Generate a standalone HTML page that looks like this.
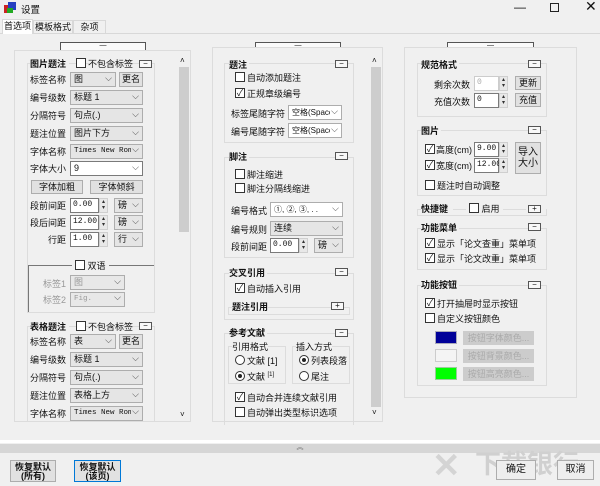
<!DOCTYPE html><html><head><meta charset="utf-8"><style>
*{box-sizing:border-box;margin:0;padding:0}
body{width:600px;height:486px;background:#f0f0f0;position:relative;overflow:hidden;font-family:"Liberation Sans","Noto Sans CJK SC",sans-serif;font-size:9px;color:#111}
.a{position:absolute;white-space:nowrap}
.b{font-weight:bold}
.grp{position:absolute;border:1px solid #dcdcdc}
.pan{position:absolute;border:1px solid #dcdcdc;background:#f0f0f0}
.cb{position:absolute;width:10px;height:10px;border:1px solid #333;background:#fff;font-size:9px;line-height:8px;text-align:center}
.rd{position:absolute;width:10px;height:10px;border:1px solid #333;border-radius:50%;background:#fff}
.rd.on::after{content:"";position:absolute;left:2px;top:2px;width:4px;height:4px;border-radius:50%;background:#222}
.cmb{position:absolute;height:15px;border:1px solid #adadad;background:#e5e5e5;padding-left:3px;line-height:13px;font-size:9px;overflow:hidden}
.cmb::after{content:"⌵";position:absolute;right:3px;top:-1px;font-size:9px;color:#444;background:inherit;padding-left:1px}
.cmb.w{background:#fff}
.cmb.d{color:#999;background:#e8e8e8}
.btn{position:absolute;border:1px solid #adadad;background:#e1e1e1;text-align:center;line-height:13px;font-size:9px}
.inp{position:absolute;height:15px;border:1px solid #7a7a7a;background:#fff;font-family:"Liberation Mono",monospace;font-size:8px;padding-left:2px;line-height:12px}
.sp{position:absolute;width:9px;height:15px;background:#e8e8e8;border:1px solid #cfcfcf;font-size:6px;line-height:6px;text-align:center;color:#333}
.mn{position:absolute;width:13px;height:8px;border:1px solid #555;background:#f8f8f8;font-size:8px;line-height:5px;text-align:center}
.top{position:absolute;height:9px;border:1px solid #555;background:#fafafa;font-size:7px;line-height:5px;text-align:center}
.sb{position:absolute;width:12px;background:#f0f0f0}
.th{position:absolute;left:1px;width:10px;background:#cdcdcd}
</style></head><body>
<div class="a" style="left:4px;top:2px;width:12px;height:12px"><div style="position:absolute;left:0;top:3px;width:8px;height:8px;background:#c22"></div><div style="position:absolute;left:4px;top:0;width:8px;height:8px;background:#2540c0"></div><div style="position:absolute;left:3px;top:6px;width:6px;height:5px;background:#2a2"></div></div>
<div class="a" style="left:21px;top:2px;font-size:9.5px">设置</div>
<div class="a" style="left:514px;top:0px;font-size:12px">—</div>
<div class="a" style="left:550px;top:3px;width:9px;height:9px;border:1px solid #222"></div>
<div class="a" style="left:585px;top:-2px;font-size:14px">✕</div>
<div class="a" style="left:0;top:33px;width:600px;height:1px;background:#d8d8d8"></div>
<div class="a" style="left:2px;top:19px;width:31px;height:15px;background:#fff;border:1px solid #d8d8d8;border-bottom:none;text-align:center;line-height:13px">首选项</div>
<div class="a" style="left:33px;top:20px;width:40px;height:13px;border:1px solid #d8d8d8;border-bottom:none;text-align:center;line-height:12px">模板格式</div>
<div class="a" style="left:73px;top:20px;width:33px;height:13px;border:1px solid #d8d8d8;border-bottom:none;text-align:center;line-height:12px">杂项</div>
<div class="a" style="left:0;top:34px;width:600px;height:406px;background:#f0f0f0"></div>

<div class="top" style="left:60px;top:42px;width:86px">—</div>
<div class="pan" style="left:14px;top:50px;width:177px;height:372px"></div>
<div class="sb" style="left:178px;top:55px;height:365px"><div class="a" style="left:2px;top:1px;font-size:8px">˄</div><div class="th" style="top:12px;height:165px"></div><div class="a" style="left:2px;bottom:1px;font-size:8px">˅</div></div>
<div class="grp" style="left:27px;top:63px;width:128px;height:250px"></div>
<div class="a b" style="left:30px;top:57px;background:#f0f0f0;padding-right:3px">图片题注</div>
<div class="cb" style="left:76px;top:58px"></div><div class="a" style="left:88px;top:57px">不包含标签</div>
<div class="mn" style="left:139px;top:60px">−</div>
<div class="a" style="left:30px;top:73px">标签名称</div><div class="cmb" style="left:70px;top:72px;width:46px">图</div><div class="btn" style="left:119px;top:72px;width:24px;height:15px">更名</div>
<div class="a" style="left:30px;top:91px">编号级数</div><div class="cmb" style="left:70px;top:90px;width:73px">标题 1</div>
<div class="a" style="left:30px;top:109px">分隔符号</div><div class="cmb" style="left:70px;top:108px;width:73px">句点(.)</div>
<div class="a" style="left:30px;top:127px">题注位置</div><div class="cmb" style="left:70px;top:126px;width:73px">图片下方</div>
<div class="a" style="left:30px;top:145px">字体名称</div><div class="cmb" style="left:70px;top:144px;width:73px;font-family:'Liberation Mono';font-size:7.5px">Times New Roma</div>
<div class="a" style="left:30px;top:162px">字体大小</div><div class="cmb w" style="left:70px;top:161px;width:73px;border-color:#7a7a7a">9</div>
<div class="btn" style="left:31px;top:180px;width:52px;height:14px">字体加粗</div><div class="btn" style="left:90px;top:180px;width:53px;height:14px">字体倾斜</div>
<div class="a" style="left:30px;top:199px">段前间距</div><div class="inp" style="left:70px;top:198px;width:29px">0.00</div><div class="sp" style="left:99px;top:198px">▴<br>▾</div><div class="cmb" style="left:114px;top:198px;width:29px">磅</div>
<div class="a" style="left:30px;top:216px">段后间距</div><div class="inp" style="left:70px;top:215px;width:29px">12.00</div><div class="sp" style="left:99px;top:215px">▴<br>▾</div><div class="cmb" style="left:114px;top:215px;width:29px">磅</div>
<div class="a" style="left:48px;top:233px">行距</div><div class="inp" style="left:70px;top:232px;width:29px">1.00</div><div class="sp" style="left:99px;top:232px">▴<br>▾</div><div class="cmb" style="left:114px;top:232px;width:29px">行</div>
<div class="a" style="left:28px;top:265px;width:126px;height:47px;border-top:1px solid #777;border-left:1px solid #777"></div>
<div class="a" style="left:72px;top:259px;background:#f0f0f0;padding:0 3px"><span style="display:inline-block;width:10px;height:10px;border:1px solid #333;background:#fff;vertical-align:-1px"></span> 双语</div>
<div class="a" style="left:43px;top:277px;color:#999">标签1</div><div class="cmb d" style="left:70px;top:275px;width:55px">图</div>
<div class="a" style="left:43px;top:293px;color:#999">标签2</div><div class="cmb d" style="left:70px;top:292px;width:55px;font-family:'Liberation Mono';font-size:7.5px">Fig.</div>
<div class="grp" style="left:27px;top:326px;width:128px;height:100px;border-bottom:none"></div>
<div class="a b" style="left:30px;top:320px;background:#f0f0f0;padding-right:3px">表格题注</div>
<div class="cb" style="left:76px;top:321px"></div><div class="a" style="left:88px;top:320px">不包含标签</div>
<div class="mn" style="left:139px;top:322px">−</div>
<div class="a" style="left:30px;top:335px">标签名称</div><div class="cmb" style="left:70px;top:334px;width:46px">表</div><div class="btn" style="left:119px;top:334px;width:24px;height:15px">更名</div>
<div class="a" style="left:30px;top:353px">编号级数</div><div class="cmb" style="left:70px;top:352px;width:73px">标题 1</div>
<div class="a" style="left:30px;top:371px">分隔符号</div><div class="cmb" style="left:70px;top:370px;width:73px">句点(.)</div>
<div class="a" style="left:30px;top:389px">题注位置</div><div class="cmb" style="left:70px;top:388px;width:73px">表格上方</div>
<div class="a" style="left:30px;top:407px">字体名称</div><div class="cmb" style="left:70px;top:406px;width:73px;font-family:'Liberation Mono';font-size:7.5px">Times New Roma</div>
<div class="a" style="left:14px;top:422px;width:177px;height:18px;background:#f0f0f0"></div>

<div class="top" style="left:255px;top:42px;width:86px">—</div>
<div class="pan" style="left:212px;top:47px;width:171px;height:375px"></div>
<div class="sb" style="left:370px;top:55px;height:363px"><div class="a" style="left:2px;top:1px;font-size:8px">˄</div><div class="th" style="top:12px;height:340px"></div><div class="a" style="left:2px;bottom:1px;font-size:8px">˅</div></div>
<div class="grp" style="left:224px;top:63px;width:130px;height:80px"></div>
<div class="a b" style="left:229px;top:58px;background:#f0f0f0;padding-right:2px">题注</div><div class="mn" style="left:335px;top:60px">−</div>
<div class="cb" style="left:235px;top:72px"></div><div class="a" style="left:247px;top:71px">自动添加题注</div>
<div class="cb" style="left:235px;top:88px">✓</div><div class="a" style="left:247px;top:87px">正规章级编号</div>
<div class="a" style="left:231px;top:107px">标签尾随字符</div><div class="cmb w" style="left:288px;top:105px;width:54px;font-size:8px">空格(Space</div>
<div class="a" style="left:231px;top:125px">编号尾随字符</div><div class="cmb w" style="left:288px;top:123px;width:54px;font-size:8px">空格(Space</div>
<div class="grp" style="left:224px;top:157px;width:130px;height:101px"></div>
<div class="a b" style="left:229px;top:150px;background:#f0f0f0;padding-right:2px">脚注</div><div class="mn" style="left:335px;top:152px">−</div>
<div class="cb" style="left:235px;top:169px"></div><div class="a" style="left:247px;top:168px">脚注缩进</div>
<div class="cb" style="left:235px;top:183px"></div><div class="a" style="left:247px;top:182px">脚注分隔线缩进</div>
<div class="a" style="left:231px;top:204px">编号格式</div><div class="cmb w" style="left:270px;top:202px;width:73px;font-size:8px">①, ②, ③, . .</div>
<div class="a" style="left:231px;top:223px">编号规则</div><div class="cmb" style="left:270px;top:221px;width:73px">连续</div>
<div class="a" style="left:231px;top:240px">段前间距</div><div class="inp" style="left:270px;top:238px;width:29px">0.00</div><div class="sp" style="left:299px;top:238px">▴<br>▾</div><div class="cmb" style="left:314px;top:238px;width:29px">磅</div>
<div class="grp" style="left:224px;top:273px;width:130px;height:47px"></div>
<div class="a b" style="left:229px;top:266px;background:#f0f0f0;padding-right:2px">交叉引用</div><div class="mn" style="left:335px;top:268px">−</div>
<div class="cb" style="left:235px;top:283px">✓</div><div class="a" style="left:247px;top:282px">自动插入引用</div>
<div class="grp" style="left:228px;top:307px;width:122px;height:8px"></div>
<div class="a b" style="left:232px;top:300px;background:#f0f0f0">题注引用</div><div class="mn" style="left:331px;top:302px">+</div>
<div class="grp" style="left:224px;top:333px;width:130px;height:92px;border-bottom:none"></div>
<div class="a b" style="left:229px;top:326px;background:#f0f0f0;padding-right:2px">参考文献</div><div class="mn" style="left:335px;top:329px">−</div>
<div class="grp" style="left:228px;top:346px;width:58px;height:38px"></div><div class="a" style="left:232px;top:340px;background:#f0f0f0">引用格式</div>
<div class="grp" style="left:292px;top:346px;width:58px;height:38px"></div><div class="a" style="left:296px;top:340px;background:#f0f0f0">插入方式</div>
<div class="rd" style="left:235px;top:355px"></div><div class="a" style="left:247px;top:354px">文献 [1]</div>
<div class="rd on" style="left:235px;top:371px"></div><div class="a" style="left:247px;top:370px">文献 <sup style="font-size:6px">[1]</sup></div>
<div class="rd on" style="left:299px;top:355px"></div><div class="a" style="left:311px;top:354px">列表段落</div>
<div class="rd" style="left:299px;top:371px"></div><div class="a" style="left:311px;top:370px">尾注</div>
<div class="cb" style="left:235px;top:392px">✓</div><div class="a" style="left:247px;top:391px">自动合并连续文献引用</div>
<div class="cb" style="left:235px;top:407px"></div><div class="a" style="left:247px;top:406px">自动弹出类型标识选项</div>

<div class="top" style="left:447px;top:42px;width:87px">—</div>
<div class="pan" style="left:404px;top:47px;width:173px;height:351px"></div>
<div class="grp" style="left:417px;top:63px;width:130px;height:54px"></div>
<div class="a b" style="left:421px;top:58px;background:#f0f0f0;padding-right:2px">规范格式</div><div class="mn" style="left:528px;top:60px">−</div>
<div class="a" style="left:434px;top:78px">剩余次数</div><div class="inp" style="left:474px;top:76px;width:25px;color:#aaa;border-color:#ccc">0</div><div class="sp" style="left:499px;top:76px">▴<br>▾</div><div class="btn" style="left:515px;top:76px;width:26px;height:14px">更新</div>
<div class="a" style="left:434px;top:95px">充值次数</div><div class="inp" style="left:474px;top:93px;width:25px">0</div><div class="sp" style="left:499px;top:93px">▴<br>▾</div><div class="btn" style="left:515px;top:93px;width:26px;height:14px">充值</div>
<div class="grp" style="left:417px;top:130px;width:130px;height:66px"></div>
<div class="a b" style="left:421px;top:124px;background:#f0f0f0;padding-right:2px">图片</div><div class="mn" style="left:528px;top:126px">−</div>
<div class="cb" style="left:425px;top:144px">✓</div><div class="a" style="left:436px;top:143px">高度(cm)</div><div class="inp" style="left:474px;top:142px;width:25px">9.00</div><div class="sp" style="left:499px;top:142px">▴<br>▾</div>
<div class="cb" style="left:425px;top:160px">✓</div><div class="a" style="left:436px;top:159px">宽度(cm)</div><div class="inp" style="left:474px;top:158px;width:25px">12.00</div><div class="sp" style="left:499px;top:158px">▴<br>▾</div>
<div class="btn" style="left:515px;top:142px;width:26px;height:32px;line-height:11px;padding-top:4px;font-size:10px">导入<br>大小</div>
<div class="cb" style="left:425px;top:180px"></div><div class="a" style="left:437px;top:179px">题注时自动调整</div>
<div class="grp" style="left:417px;top:209px;width:130px;height:7px"></div>
<div class="a b" style="left:421px;top:202px;background:#f0f0f0;padding-right:5px">快捷键</div>
<div class="a" style="left:466px;top:202px;background:#f0f0f0;padding:0 3px"><span style="display:inline-block;width:10px;height:10px;border:1px solid #333;background:#fff;vertical-align:-1px"></span> 启用</div>
<div class="a" style="left:526px;top:203px;background:#f0f0f0;width:20px;height:10px"></div><div class="mn" style="left:528px;top:205px">+</div>
<div class="grp" style="left:417px;top:228px;width:130px;height:42px"></div>
<div class="a b" style="left:421px;top:221px;background:#f0f0f0;padding-right:2px">功能菜单</div><div class="mn" style="left:528px;top:223px">−</div>
<div class="cb" style="left:425px;top:238px">✓</div><div class="a" style="left:437px;top:237px">显示「论文查重」菜单项</div>
<div class="cb" style="left:425px;top:253px">✓</div><div class="a" style="left:437px;top:252px">显示「论文改重」菜单项</div>
<div class="grp" style="left:417px;top:285px;width:130px;height:101px"></div>
<div class="a b" style="left:421px;top:278px;background:#f0f0f0;padding-right:2px">功能按钮</div><div class="mn" style="left:528px;top:281px">−</div>
<div class="cb" style="left:425px;top:298px">✓</div><div class="a" style="left:437px;top:297px">打开抽屉时显示按钮</div>
<div class="cb" style="left:425px;top:313px"></div><div class="a" style="left:437px;top:312px">自定义按钮颜色</div>
<div class="a" style="left:435px;top:331px;width:22px;height:13px;background:#000099;border:1px solid #aab"></div>
<div class="a" style="left:435px;top:349px;width:22px;height:13px;background:#f4f4f4;border:1px solid #ccc"></div>
<div class="a" style="left:435px;top:367px;width:22px;height:13px;background:#00ff00;border:1px solid #9c9"></div>
<div class="btn" style="left:463px;top:331px;width:71px;height:14px;color:#aaa;background:#ccc;border-color:#ccc">按钮字体颜色...</div>
<div class="btn" style="left:463px;top:349px;width:71px;height:14px;color:#aaa;background:#ccc;border-color:#ccc">按钮背景颜色...</div>
<div class="btn" style="left:463px;top:367px;width:71px;height:14px;color:#aaa;background:#ccc;border-color:#ccc">按钮高亮颜色...</div>

<div class="a" style="left:0;top:440px;width:600px;height:3px;background:#fff"></div>
<div class="a" style="left:0;top:444px;width:600px;height:9px;background:#d6d6d6;text-align:center;font-size:7px;line-height:8px;color:#666">︽</div>
<div class="a" style="left:0;top:453px;width:600px;height:33px;background:#f0f0f0"></div>
<div class="btn b" style="left:10px;top:460px;width:46px;height:22px;line-height:9px;padding-top:2px;font-size:9px">恢复默认<br>(所有)</div>
<div class="btn b" style="left:74px;top:460px;width:47px;height:22px;line-height:9px;padding-top:2px;font-size:9px;border:1px solid #0078d7">恢复默认<br>(该页)</div>
<div class="a" style="left:432px;top:449px;width:40px;height:34px;color:#d4d4d4;font-size:34px;line-height:34px;font-weight:bold">✕</div>
<div class="a" style="left:475px;top:444px;font-size:26px;color:#d0d0d0;font-weight:bold">下载银行</div>
<div class="btn" style="left:496px;top:460px;width:40px;height:20px;line-height:18px;font-size:10px;background:#eee">确定</div>
<div class="btn" style="left:557px;top:460px;width:37px;height:20px;line-height:18px;font-size:10px;background:#eee">取消</div>
</body></html>
